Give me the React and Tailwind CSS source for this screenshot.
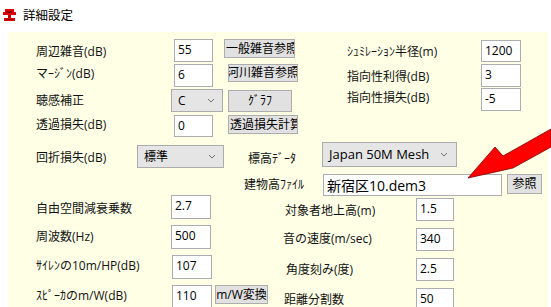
import React from "react";

const FONT = { fontFamily: '"Open Sans", "Noto Sans CJK JP", sans-serif' };

function Field({ w, h = 23, value, className = "" }) {
  return (
    <div
      className={`shrink-0 border border-[#ABADB3] bg-white text-[12px] leading-[16px] pl-[3px] pt-[2px] text-black ${className}`}
      style={{ width: w, height: h }}
    >
      {value}
    </div>
  );
}

function Btn({ w, h = 19, children, className = "", left = false }) {
  return (
    <div
      className={`shrink-0 flex items-center overflow-hidden whitespace-nowrap border border-[#ADADAD] bg-[#E1E1E1] text-[12px] text-black ${left ? "justify-start pl-[1px]" : "justify-center"} ${className}`}
      style={{ width: w, height: h }}
    >
      {children}
    </div>
  );
}

function Chevron() {
  return (
    <svg width="8" height="5" viewBox="0 0 8 5" className="shrink-0">
      <path d="M1 1 L4 4 L7 1" fill="none" stroke="#707070" strokeWidth="1" />
    </svg>
  );
}

function Sel({ w, h = 23, value, textClass = "text-[12px]", padL = "pl-[6px]", padR = "pr-[7px]", className = "" }) {
  return (
    <div
      className={`shrink-0 flex items-center justify-between border border-[#ACACAC] bg-[#E5E5E5] text-black ${padL} ${padR} ${className}`}
      style={{ width: w, height: h }}
    >
      <span className={`${textClass} leading-none`}>{value}</span>
      <Chevron />
    </div>
  );
}

function Label({ w, children, className = "" }) {
  return (
    <div className={`shrink-0 whitespace-nowrap text-[12px] text-[#111] leading-none ${className}`} style={{ width: w }}>
      {children}
    </div>
  );
}

export default function App() {
  return (
    <div className="relative w-[551px] h-[307px] bg-white overflow-hidden" style={FONT}>
      {/* title bar */}
      <div className="h-[32px] flex items-start pt-[8px] pl-[3px]">
        <svg width="13" height="13" viewBox="0 0 13 13" className="shrink-0 mt-[1px]">
          <rect x="2" y="0" width="9" height="6" fill="#E00000" />
          <rect x="0" y="3" width="13" height="3" fill="#E00000" />
          <rect x="4" y="2" width="5" height="2" fill="#8B0000" />
          <rect x="5" y="6" width="3" height="4" fill="#C00000" />
          <rect x="1" y="9" width="11" height="3" fill="#E00000" />
          <rect x="3" y="10" width="7" height="1" fill="#900000" />
        </svg>
        <span className="ml-[7px] text-[12.5px] leading-[14px] text-black mt-[1px]">詳細設定</span>
      </div>

      {/* panel */}
      <div className="ml-[8px] w-[540px] h-[275px] bg-[#FFFFE6] pl-[28px] pt-[7px]">
        {/* section 1 */}
        <div className="flex h-[101px]">
          <div className="w-[311px] flex flex-col">
            <div className="flex items-start h-[23px]">
              <Label w={138} className="mt-[7px]">周辺雑音(dB)</Label>
              <Field w={39} value="55" />
              <Btn w={71} h={19} className="ml-[11px] text-[12.5px]" left>一般雑音参照</Btn>
            </div>
            <div className="flex items-start h-[23px] mt-[2px]">
              <Label w={138} className="mt-[4px]">マｰｼﾞﾝ(dB)</Label>
              <Field w={39} value="6" />
              <Btn w={70} h={18} className="ml-[15px]">河川雑音参照</Btn>
            </div>
            <div className="flex items-center h-[23px] mt-[2px]">
              <Label w={135}>聴感補正</Label>
              <Sel w={52} value="C" />
              <Btn w={64} h={22} className="ml-[5px]">ｸﾞﾗﾌ</Btn>
            </div>
            <div className="flex items-start h-[22px] mt-[3px]">
              <Label w={138} className="mt-[4px]">透過損失(dB)</Label>
              <Field w={39} h={22} value="0" />
              <Btn w={70} h={19} className="ml-[15px] text-[12.5px]" left>透過損失計算</Btn>
            </div>
          </div>
          <div className="flex flex-col pt-[1px]">
            <div className="flex items-center h-[22px]">
              <Label w={134} className="mt-[2px] text-[11px]">ｼｭﾐﾚｰｼｮﾝ半径(m)</Label>
              <Field w={40} h={22} value="1200" />
            </div>
            <div className="flex items-center h-[23px] mt-[2px]">
              <Label w={134} className="mt-[2px]">指向性利得(dB)</Label>
              <Field w={40} value="3" />
            </div>
            <div className="flex items-center h-[23px] mt-[1px]">
              <Label w={134} className="mt-[-3px]">指向性損失(dB)</Label>
              <Field w={40} value="-5" />
            </div>
          </div>
        </div>

        {/* section 2 */}
        <div className="flex items-start h-[25px] mt-[2px]">
          <Label w={101} className="mt-[10px]">回折損失(dB)</Label>
          <Sel w={87} value="標準" className="mt-[3px]" />
          <Label w={74} className="ml-[24px] mt-[11px]">標高ﾃﾞｰﾀ</Label>
          <Sel w={135} h={25} value="Japan 50M Mesh" textClass="text-[13px]" padR="pr-[8px]" />
        </div>
        <div className="flex items-center h-[22px] mt-[7px] pl-[208px]">
          <Label w={79}>建物高ﾌｧｲﾙ</Label>
          <Field w={179} h={22} value="新宿区10.dem3" className="text-[14px] leading-[17px] pt-[1px]" />
          <Btn w={35} h={20} className="ml-[5px] self-start">参照</Btn>
        </div>

        {/* section 3 */}
        <div className="flex mt-[-1px]">
          <div className="w-[247px] flex flex-col">
            <div className="flex items-center h-[24px]">
              <Label w={135} className="mt-[4px]">自由空間減衰乗数</Label>
              <Field w={40} h={24} value="2.7" />
            </div>
            <div className="flex items-center h-[24px] mt-[6px]">
              <Label w={135}>周波数(Hz)</Label>
              <Field w={40} h={24} value="500" />
            </div>
            <div className="flex items-center h-[24px] mt-[6px]">
              <Label w={136} className="text-[11px] mt-[-3px]">ｻｲﾚﾝの10m/HP(dB)</Label>
              <Field w={40} h={24} value="107" />
            </div>
            <div className="flex items-start h-[24px] mt-[6px]">
              <Label w={136} className="text-[11px] mt-[5px]">ｽﾋﾟｰｶのm/W(dB)</Label>
              <Field w={40} h={24} value="110" />
              <Btn w={53} h={19} className="ml-[3px]">m/W変換</Btn>
            </div>
          </div>
          <div className="flex flex-col pt-[3px]">
            <div className="flex items-center h-[23px]">
              <Label w={133} className="pl-[2px] mt-[2px]">対象者地上高(m)</Label>
              <Field w={38} value="1.5" />
            </div>
            <div className="flex items-center h-[23px] mt-[7px]">
              <Label w={133} className="mt-[-1px]">音の速度(m/sec)</Label>
              <Field w={38} value="340" />
            </div>
            <div className="flex items-center h-[23px] mt-[7px]">
              <Label w={133} className="pl-[3px]">角度刻み(度)</Label>
              <Field w={38} value="2.5" />
            </div>
            <div className="flex items-center h-[23px] mt-[7px]">
              <Label w={133} className="pl-[1px] mt-[1px]">距離分割数</Label>
              <Field w={38} value="50" />
            </div>
          </div>
        </div>
      </div>

      {/* red arrow overlay */}
      <svg className="absolute left-0 top-0 pointer-events-none" width="551" height="307" viewBox="0 0 551 307">
        <polygon
          points="468,178 495,147 503,156 551,129 551,147 513,168"
          fill="#FF0000"
          stroke="#7A0000"
          strokeWidth="0.8"
          strokeLinejoin="miter"
        />
      </svg>
    </div>
  );
}
